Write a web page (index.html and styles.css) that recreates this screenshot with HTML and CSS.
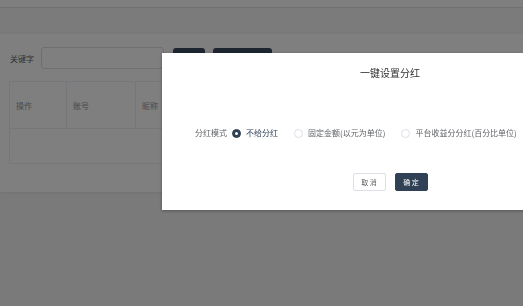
FILE: index.html
```html
<!DOCTYPE html>
<html lang="zh-CN">
<head>
  <meta charset="UTF-8">
  <meta name="viewport" content="width=device-width, initial-scale=1.0">
  <title>分红管理</title>
  <link rel="stylesheet" href="styles.css">
</head>
<body>
  <div class="topbar"></div>
  <div class="tags"></div>

  <div class="card">
    <div class="search">
      <label class="search-label">关键字</label>
      <input class="search-input" type="text">
      <button class="btn-dark btn-sm"></button>
      <button class="btn-dark btn-md"></button>
    </div>
    <div class="table">
      <div class="table-head">
        <div class="cell col-op">操作</div>
        <div class="cell col-acc">账号</div>
        <div class="cell col-nick">昵称</div>
        <div class="cell col-rest"></div>
      </div>
      <div class="table-body"></div>
    </div>
  </div>

  <div class="mask"></div>

  <div class="dialog">
    <div class="dialog-title">一键设置分红</div>
    <div class="dialog-body">
      <span class="form-label">分红模式</span>
      <label class="radio checked"><span class="radio-dot"></span>不给分红</label>
      <label class="radio"><span class="radio-dot"></span>固定金额(以元为单位)</label>
      <label class="radio"><span class="radio-dot"></span>平台收益分分红(百分比单位)</label>
    </div>
    <div class="dialog-footer">
      <button class="btn-cancel">取 消</button>
      <button class="btn-ok">确 定</button>
    </div>
  </div>
</body>
</html>
```

FILE: styles.css
```css
:root {
  --primary: #304156;
  --border: #dcdfe6;
  --text: #606266;
}
html, body {
  margin: 0;
  height: 100%;
  overflow: hidden;
}
body {
  font-family: "Noto Sans CJK SC", "Noto Sans", sans-serif;
  background: #f5f5f5;
  color: var(--text);
}
.topbar {
  height: 7px;
  background: #fff;
  border-bottom: 1px solid #e4e4e4;
}
.tags {
  height: 26px;
  background: #f6f6f6;
}
.card {
  background: #fff;
  height: 158px;
  padding: 12px 0 0 9px;
  box-sizing: border-box;
  box-shadow: 0 1px 3px rgba(0, 0, 0, 0.08);
}
.search {
  display: flex;
  align-items: center;
  height: 24px;
}
.search-label {
  font-size: 8px;
  width: 31px;
  padding-left: 1px;
}
.search-input {
  width: 123px;
  height: 22px;
  box-sizing: border-box;
  border: 1px solid var(--border);
  border-radius: 3px;
  margin: 0;
}
.btn-dark {
  height: 22px;
  margin: 2px 0 0;
  border: none;
  border-radius: 3px;
  background: #3a4c60;
  align-self: flex-start;
}
.btn-sm {
  width: 32px;
  margin-left: 9px;
}
.btn-md {
  width: 59px;
  margin-left: 8px;
}
.table {
  margin-top: 11px;
  border: 1px solid #ebeef5;
  border-right: none;
}
.table-head {
  display: flex;
  height: 46px;
  border-bottom: 1px solid #ebeef5;
}
.cell {
  display: flex;
  align-items: center;
  font-size: 8px;
  color: #909399;
  padding-left: 6px;
  border-right: 1px solid #ebeef5;
}
.col-op { width: 50px; }
.col-acc { width: 62px; }
.col-nick { width: 60px; }
.col-rest { flex: 1; border-right: none; }
.table-body {
  height: 34px;
}
.mask {
  position: fixed;
  inset: 0;
  background: rgba(0, 0, 0, 0.5);
}
.dialog {
  position: absolute;
  left: 162px;
  top: 53px;
  width: 456px;
  height: 157px;
  background: #fff;
  box-shadow: 0 1px 3px rgba(0, 0, 0, 0.3);
  display: flex;
  flex-direction: column;
}
.dialog-title {
  text-align: center;
  font-size: 10px;
  line-height: 14px;
  color: #303133;
  padding-top: 13px;
}
.dialog-body {
  display: flex;
  align-items: center;
  padding: 46px 0 0 33px;
  font-size: 8px;
  line-height: 14px;
}
.form-label {
  margin-right: 5px;
}
.radio {
  display: flex;
  align-items: center;
  gap: 5px;
  margin-right: 16px;
  color: var(--text);
}
.radio.checked {
  color: var(--primary);
}
.radio-dot {
  width: 7px;
  height: 7px;
  border: 1px solid var(--border);
  border-radius: 50%;
  box-sizing: content-box;
}
.radio.checked .radio-dot {
  background: var(--primary);
  border-color: var(--primary);
  position: relative;
}
.radio.checked .radio-dot::after {
  content: "";
  position: absolute;
  left: 2px;
  top: 2px;
  width: 3px;
  height: 3px;
  border-radius: 50%;
  background: #fff;
}
.dialog-footer {
  display: flex;
  justify-content: center;
  gap: 9px;
  margin-top: 33px;
}
.dialog-footer button {
  width: 33px;
  height: 18px;
  font-family: inherit;
  font-size: 7px;
  border-radius: 2px;
  padding: 0;
  cursor: pointer;
}
.btn-cancel {
  background: #fff;
  border: 1px solid var(--border);
  color: var(--text);
}
.btn-ok {
  background: var(--primary);
  border: 1px solid var(--primary);
  color: #fff;
}
```
